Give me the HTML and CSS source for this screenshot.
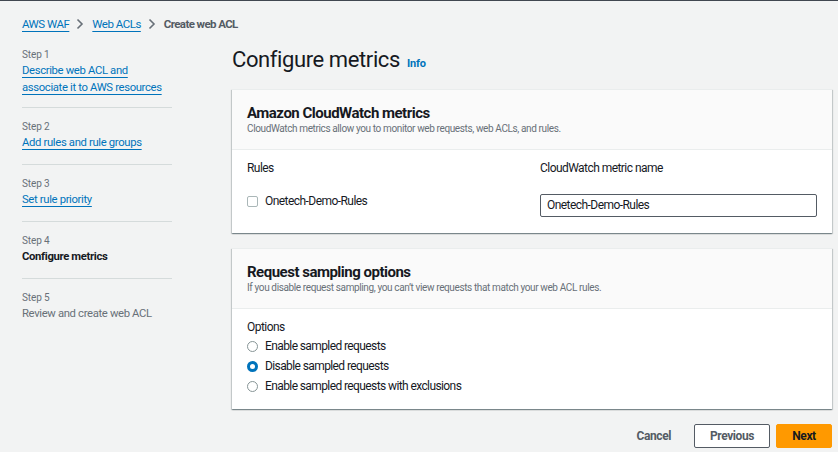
FILE: index.html
```html
<!DOCTYPE html>
<html lang="en">
<head>
<meta charset="utf-8">
<title>Create web ACL - Configure metrics</title>
<link rel="stylesheet" href="styles.css">
</head>
<body>
<nav class="breadcrumbs">
  <a class="crumb-link" href="#">AWS WAF</a>
  <svg class="chev" viewBox="0 0 8 12" width="8" height="12"><path d="M1.5 1.5 L6 6 L1.5 10.5" fill="none" stroke="#687078" stroke-width="1.6"/></svg>
  <a class="crumb-link" href="#">Web ACLs</a>
  <svg class="chev" viewBox="0 0 8 12" width="8" height="12"><path d="M1.5 1.5 L6 6 L1.5 10.5" fill="none" stroke="#687078" stroke-width="1.6"/></svg>
  <span class="crumb-current">Create web ACL</span>
</nav>
<div class="layout">
  <ol class="steps">
    <li class="step step-first">
      <div class="step-label">Step 1</div>
      <div class="step-text"><a class="step-link" href="#">Describe web ACL and associate it to AWS resources</a></div>
    </li>
    <li class="step">
      <div class="step-label">Step 2</div>
      <div class="step-text"><a class="step-link" href="#">Add rules and rule groups</a></div>
    </li>
    <li class="step">
      <div class="step-label">Step 3</div>
      <div class="step-text"><a class="step-link" href="#">Set rule priority</a></div>
    </li>
    <li class="step">
      <div class="step-label">Step 4</div>
      <div class="step-text step-current">Configure metrics</div>
    </li>
    <li class="step step-last">
      <div class="step-label">Step 5</div>
      <div class="step-text step-disabled">Review and create web ACL</div>
    </li>
  </ol>
  <main class="main">
    <h1 class="page-title">Configure metrics <a class="info" href="#">Info</a></h1>

    <section class="card">
      <header class="card-header">
        <h2 class="card-title">Amazon CloudWatch metrics</h2>
        <p class="card-desc">CloudWatch metrics allow you to monitor web requests, web ACLs, and rules.</p>
      </header>
      <div class="card-body metrics-grid">
        <div class="field-label">Rules</div>
        <div class="field-label">CloudWatch metric name</div>
        <label class="check-row"><span class="checkbox"></span>Onetech-Demo-Rules</label>
        <div class="input">Onetech-Demo-Rules</div>
      </div>
    </section>

    <section class="card">
      <header class="card-header">
        <h2 class="card-title">Request sampling options</h2>
        <p class="card-desc">If you disable request sampling, you can’t view requests that match your web ACL rules.</p>
      </header>
      <div class="card-body card-body-tight">
        <div class="field-label">Options</div>
        <label class="radio-row"><span class="radio"></span>Enable sampled requests</label>
        <label class="radio-row"><span class="radio radio-on"></span>Disable sampled requests</label>
        <label class="radio-row"><span class="radio"></span>Enable sampled requests with exclusions</label>
      </div>
    </section>

    <div class="actions">
      <button class="btn btn-link">Cancel</button>
      <button class="btn btn-normal">Previous</button>
      <button class="btn btn-primary">Next</button>
    </div>
  </main>
</div>
</body>
</html>
```

FILE: styles.css
```css
* { box-sizing: border-box; }

html, body {
  margin: 0;
  padding: 0;
}

body {
  background: #f2f3f3;
  border-top: 1px solid #414750;
  font-family: "Roboto", "Lato", sans-serif;
  letter-spacing: -0.55px;
  color: #16191f;
  height: 452px;
  overflow: hidden;
}

a { color: #0073bb; }

/* Breadcrumbs */
.breadcrumbs {
  display: flex;
  align-items: center;
  padding: 14px 22px 0;
  height: 32px;
  font-size: 11.5px;
  line-height: 18px;
  letter-spacing: -0.5px;
}
.crumb-link {
  text-decoration: underline;
  text-underline-offset: 3px;
  text-decoration-thickness: 1px;
}
.crumb-current {
  color: #545b64;
  font-weight: 700;
  letter-spacing: -0.6px;
}
.chev {
  display: block;
  margin: 0 8px 0 7px;
}

/* Layout */
.layout {
  display: flex;
  gap: 60px;
  padding: 13px 6px 0 22px;
}

/* Side steps */
.steps {
  list-style: none;
  margin: 0;
  padding: 0;
  width: 150px;
  flex: none;
}
.step {
  padding: 11px 0 13px;
  border-bottom: 1px solid #d5dbdb;
}
.step-first { padding-top: 1px; padding-bottom: 11px; }
.step-last { border-bottom: 0; }
.step-label {
  font-size: 10px;
  line-height: 15px;
  color: #687078;
  letter-spacing: -0.1px;
}
.step-text {
  font-size: 11.3px;
  line-height: 17px;
  letter-spacing: -0.35px;
}
.step-link {
  text-decoration: underline;
  text-underline-offset: 3px;
}
.step-current { font-weight: 700; color: #16191f; }
.step-disabled { color: #687078; }

/* Main */
.main {
  flex: 1;
  min-width: 0;
}
.page-title {
  margin: 0 0 15px;
  font-size: 22px;
  line-height: 28px;
  font-weight: 400;
  letter-spacing: -0.4px;
  color: #16191f;
}
.info {
  font-size: 11px;
  line-height: 14px;
  font-weight: 700;
  letter-spacing: -0.2px;
  text-decoration: none;
  margin-left: 2px;
}

.card {
  background: #ffffff;
  box-shadow: 0 1px 1px 0 rgba(0, 28, 36, 0.3), 1px 1px 1px 0 rgba(0, 28, 36, 0.15), -1px 1px 1px 0 rgba(0, 28, 36, 0.15);
  border-top: 1px solid #eaeded;
  margin-bottom: 15px;
}
.card-header {
  background: #fafafa;
  padding: 14px 15px 13px;
  border-bottom: 1px solid #eaeded;
}
.card-title {
  margin: 0;
  font-size: 15px;
  line-height: 18px;
  font-weight: 700;
  letter-spacing: -0.5px;
}
.card-desc {
  margin: 0;
  font-size: 10px;
  line-height: 14px;
  color: #687078;
  letter-spacing: -0.38px;
}
.card-body {
  padding: 9px 15px 16px;
}
.card-body-tight {
  padding-bottom: 13px;
}

.metrics-grid {
  display: grid;
  grid-template-columns: 1fr 1fr;
  column-gap: 16px;
  row-gap: 17px;
}
.field-label {
  font-size: 12px;
  line-height: 18px;
}
.check-row {
  display: flex;
  align-items: center;
  gap: 7px;
  font-size: 12px;
  line-height: 14px;
  align-self: start;
}
.checkbox {
  width: 11px;
  height: 11px;
  border: 1px solid #aab7b8;
  border-radius: 2px;
  background: #fff;
  flex: none;
}
.input {
  height: 23px;
  border: 1px solid #545b64;
  border-radius: 2px;
  padding: 0 6px;
  font-size: 12px;
  line-height: 21px;
}

.radio-row {
  display: flex;
  align-items: center;
  gap: 7px;
  font-size: 12px;
  line-height: 20px;
  letter-spacing: -0.6px;
}
.radio {
  width: 11px;
  height: 11px;
  border: 1px solid #879596;
  border-radius: 50%;
  background: #fff;
  flex: none;
}
.radio-on {
  border: 3px solid #0073bb;
  background: #fff;
}

/* Actions */
.actions {
  display: flex;
  justify-content: flex-end;
  gap: 6px;
}
.btn {
  font-family: inherit;
  font-size: 12px;
  font-weight: 700;
  letter-spacing: -0.4px;
  height: 24px;
  border-radius: 2px;
  padding: 0 14px;
  cursor: pointer;
}
.btn-link {
  background: transparent;
  border: 1px solid transparent;
  color: #545b64;
  padding: 0 16px;
}
.btn-normal {
  background: #fff;
  border: 1px solid #545b64;
  color: #545b64;
  width: 76px;
  padding: 0;
}
.btn-primary {
  background: #ff9900;
  border: 1px solid #ff9900;
  color: #16191f;
  width: 56px;
  padding: 0;
}
```
